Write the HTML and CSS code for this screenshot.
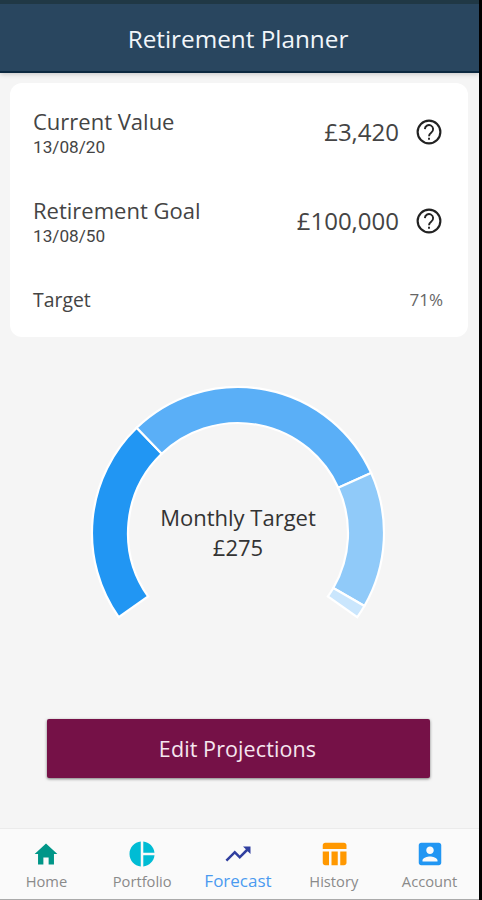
FILE: index.html
```
<!DOCTYPE html>
<html lang="en">
<head>
  <meta charset="UTF-8">
  <meta name="viewport" content="width=device-width, initial-scale=1.0">
  <title>Retirement Planner</title>
  <link rel="stylesheet" href="styles.css">
</head>
<body>

<div class="app">
  <header class="header">
    <h1>Retirement Planner</h1>
  </header>

  <main class="content">
    <section class="card">
      <div class="row">
        <div class="label">
          <h2>Current Value</h2>
          <span class="date">13/08/20</span>
        </div>
        <span class="amount">£3,420</span>
        <svg class="help" viewBox="0 0 24 24">
          <circle cx="12" cy="12" r="9.100"/>
          <path d="M8.700 9.700a3.300 3.300 0 1 1 5.200 2.700C12.700 13.300 12 13.900 12 15.400M12 16.500v1.700"/>
        </svg>
      </div>
      <div class="row">
        <div class="label">
          <h2>Retirement Goal</h2>
          <span class="date">13/08/50</span>
        </div>
        <span class="amount">£100,000</span>
        <svg class="help" viewBox="0 0 24 24">
          <circle cx="12" cy="12" r="9.100"/>
          <path d="M8.700 9.700a3.300 3.300 0 1 1 5.200 2.700C12.700 13.300 12 13.900 12 15.400M12 16.500v1.700"/>
        </svg>
      </div>
      <div class="row target">
        <span class="target-label">Target</span>
        <span class="percent">71%</span>
      </div>
    </section>

    <section class="gauge">
      <svg class="gauge-chart" viewBox="-150 -150 300 240">
        <path fill="#2196f3" d="M-119.300 84.200A146 146 0 0 1-101.300-105.200L-76.300-79.200A110 110 0 0 0-89.900 63.400z"/>
        <path fill="#5aaff7" d="M-101.300-105.200A146 146 0 0 1 133.100-60.100L100.200-45.300A110 110 0 0 0-76.300-79.200z"/>
        <path fill="#90caf9" d="M133.100-60.100A146 146 0 0 1 126.400 73L95.300 55A110 110 0 0 0 100.200-45.300z"/>
        <path fill="#cae6fd" d="M126.400 73A146 146 0 0 1 119.300 84.200L89.900 63.400A110 110 0 0 0 95.300 55z"/>
      </svg>
      <div class="gauge-text">
        <span>Monthly Target</span>
        <span>£275</span>
      </div>
    </section>

    <button type="button" class="edit">Edit Projections</button>
  </main>

  <nav class="tabs">
    <a class="tab">
      <svg class="home" viewBox="0 0 512 512"><path fill="#009688" d="M208 448V320h96v128h97.600V256H464L256 64 48 256h62.400v192z"/></svg>
      <span>Home</span>
    </a>
    <a class="tab">
      <svg viewBox="0 0 24 24"><path fill="#00bcd4" d="M11 2v20c-5.070-.5-9-4.790-9-10s3.930-9.500 9-10zm2.030 0v8.990H22c-.47-4.740-4.240-8.520-8.970-8.990zm0 11.010V22c4.740-.47 8.500-4.250 8.970-8.990h-8.970z"/></svg>
      <span>Portfolio</span>
    </a>
    <a class="tab active">
      <svg viewBox="0 0 24 24"><path fill="#303f9f" d="M16 6l2.290 2.290-4.880 4.880-4-4L2 16.590 3.410 18l6-6 4 4 6.300-6.290L22 12V6z"/></svg>
      <span>Forecast</span>
    </a>
    <a class="tab">
      <svg viewBox="0 0 24 24"><path fill="#ff9800" d="M10 10.020h5V21h-5zM17 21h3c1.100 0 2-.9 2-2v-9h-5v11zm3-18H5c-1.100 0-2 .9-2 2v3h19V5c0-1.100-.9-2-2-2zM3 19c0 1.100.9 2 2 2h3V10H3v9z"/></svg>
      <span>History</span>
    </a>
    <a class="tab">
      <svg viewBox="0 0 24 24"><path fill="#2196f3" d="M3 5v14c0 1.100.89 2 2 2h14c1.100 0 2-.9 2-2V5c0-1.100-.9-2-2-2H5c-1.110 0-2 .9-2 2zm12 4c0 1.660-1.340 3-3 3s-3-1.340-3-3 1.340-3 3-3 3 1.340 3 3zm-9 8c0-2 4-3.100 6-3.100s6 1.100 6 3.100v1H6v-1z"/></svg>
      <span>Account</span>
    </a>
  </nav>
</div>

</body>
</html>
```
FILE: styles.css
```
* {
  box-sizing: border-box;
}
body {
  margin: 0;
  background: #000;
  font-family: "Open Sans", "Noto Sans", sans-serif;
  color: #444;
}
h1, h2 {
  margin: 0;
  font-weight: 400;
}
.app {
  display: flex;
  flex-direction: column;
  width: 479px;
  height: 900px;
  background: #f5f5f5;
  border-bottom: 1px solid #aaa;
}
.header {
  display: flex;
  align-items: center;
  justify-content: center;
  height: 73px;
  padding: 2px 3px 0 0;
  background: #29465f;
  border-top: 4px solid #203845;
  border-bottom: 2px solid #0c2940;
  box-shadow: 0 1px 5px rgba(0, 0, 0, 0.2);
}
.header h1 {
  font-size: 24.3px;
  color: #f2f6fa;
}
.content {
  display: flex;
  flex-direction: column;
  flex: 1;
}
.card {
  margin: 10px 11px 0 10px;
  height: 254px;
  padding: 22px 25px 0 23px;
  background: #fff;
  border-radius: 12px;
}
.row {
  display: flex;
  align-items: center;
  height: 53px;
  margin-bottom: 36px;
}
.label {
  flex: 1;
}
.label h2 {
  font-size: 22px;
  line-height: 31px;
}
.date {
  display: block;
  font-family: Roboto, sans-serif;
  font-size: 17.2px;
  line-height: 20px;
}
.amount {
  font-size: 24px;
}
.help {
  width: 30px;
  height: 30px;
  margin: 0 -1px 0 15px;
  fill: none;
  stroke: #222;
  stroke-width: 1.7;
}
.help path {
  stroke-width: 1.5;
}
.target {
  height: 32px;
  margin: 0;
  justify-content: space-between;
}
.target-label {
  font-size: 19.4px;
}
.percent {
  font-size: 17px;
  color: #666;
}
.gauge {
  display: grid;
  justify-items: center;
  height: 240px;
  margin-top: 46px;
  padding-right: 3px;
}
.gauge-chart {
  grid-area: 1 / 1;
  width: 300px;
  height: 240px;
  stroke: #fff;
  stroke-width: 2.2;
}
.gauge-text {
  grid-area: 1 / 1;
  display: flex;
  flex-direction: column;
  align-items: center;
  padding-top: 119px;
  font-size: 22px;
  line-height: 30px;
  color: #333;
}
.edit {
  height: 59px;
  margin: 96px 49px 0 47px;
  padding-right: 8px;
  border: 0;
  border-radius: 2px;
  background: #751147;
  box-shadow: 0 1px 3px rgba(0, 0, 0, 0.5);
  font-family: inherit;
  font-size: 21.5px;
  font-weight: 500;
  letter-spacing: 0.1px;
  color: #f6e6ef;
}
.tabs {
  display: flex;
  height: 71px;
  background: #fafafa;
  border-top: 1px solid #ebebeb;
}
.tab {
  display: flex;
  flex: 1;
  flex-direction: column;
  align-items: center;
  padding-top: 10px;
  font-size: 14.7px;
  line-height: 25px;
  color: #8a8a8a;
}
.tab:first-child {
  margin-left: -1.5px;
}
.tab:last-child {
  margin-right: 1.5px;
}
.tab svg {
  width: 30px;
  height: 30px;
}
.tab .home {
  padding: 1px;
}
.tab.active {
  font-size: 17px;
  line-height: 24px;
  color: #4a9af0;
}
```
